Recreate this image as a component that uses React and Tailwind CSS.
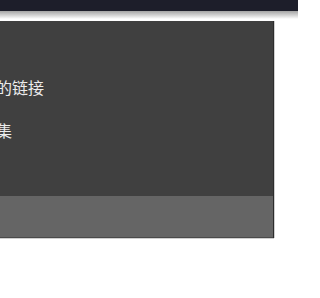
export default function App() {
  const items = ['获取文件夹的链接', '添加到收藏集'];

  return (
    <div className="w-[298px] h-[298px] overflow-hidden bg-white font-['Noto_Sans_CJK_SC',sans-serif]">
      {/* top bar + its shadow */}
      <div className="h-[11px] bg-[#1d1e2a]" />
      <div className="h-[8px] bg-gradient-to-b from-[#a4a4a4] to-white" />
      <div className="h-[2px]" />

      {/* context panel */}
      <div className="flex">
        <div className="-ml-[100px] w-[374px] border-r border-[#2c2c2c] shadow-[1px_0_0_#cfcfcf,0_1px_0_#cfcfcf]">
          <div className="bg-[#404040] pt-[44px] h-[175px]">
            {items.map((label) => (
              <div key={label} className="h-[43px] flex items-center pl-4 text-[16px] text-[#ececec] whitespace-nowrap">
                {label}
              </div>
            ))}
          </div>
          <div className="h-[42px] bg-[#656565] border-b border-[#4a4a4a]" />
        </div>
      </div>
    </div>
  );
}
